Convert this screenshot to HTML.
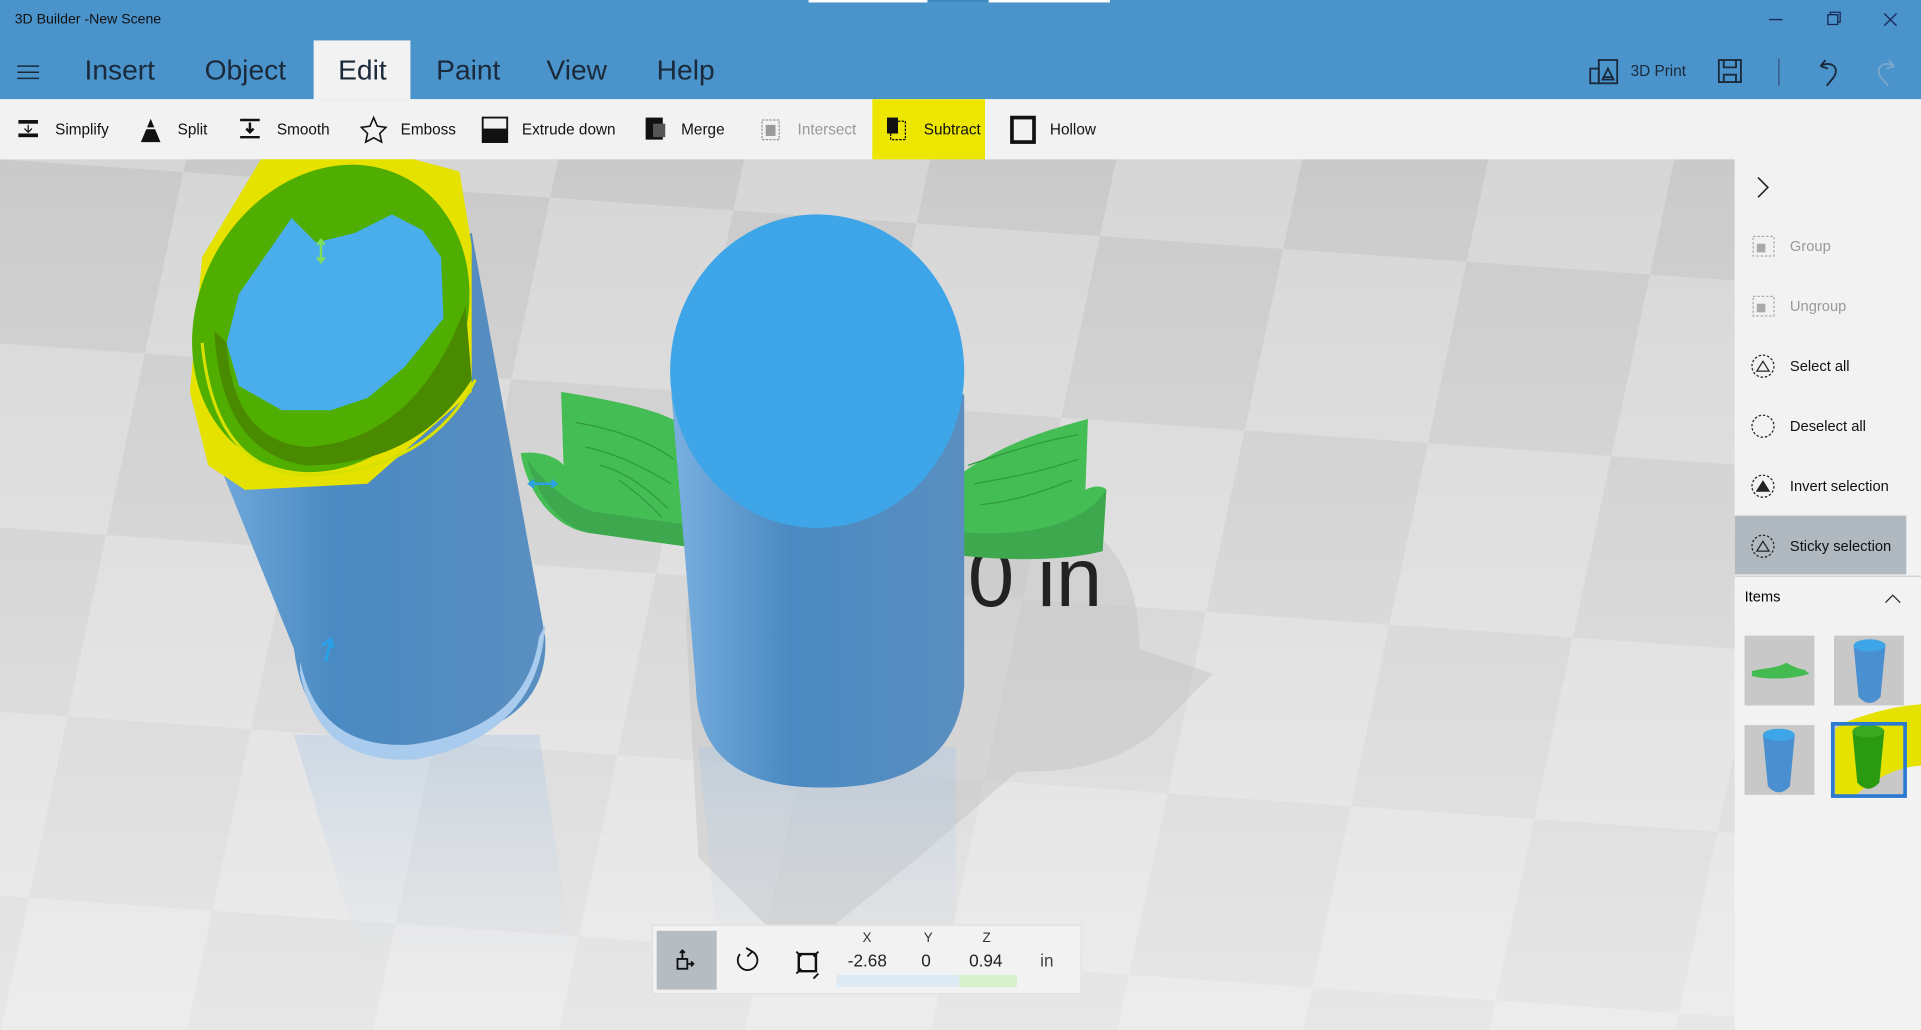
<!DOCTYPE html>
<html><head><meta charset="utf-8"><style>
html,body{margin:0;padding:0;width:1921px;height:1030px;overflow:hidden;background:#f2f2f2}
#r{position:absolute;left:0;top:0;width:1568px;height:841px;transform:scale(1.22513,1.22473);transform-origin:0 0;font-family:"Liberation Sans",sans-serif;color:#000}
.a{position:absolute;white-space:nowrap}
.tb{font-size:12.5px;top:99px;color:#111}
.tab{font-size:23px;top:44px;color:#1a2a3a}
.rp{font-size:12px;left:1461px;color:#111}
</style></head><body><div id="r">
<div class="a" style="left:0;top:0;width:1568px;height:81px;background:#4a93cb"></div>
<div class="a" style="left:660px;top:0;width:246px;height:2px;background:#fff"></div>
<div class="a" style="left:757px;top:0;width:50px;height:2px;background:#3a8ac0"></div>
<div class="a" style="left:12px;top:10px;font-size:11.5px;color:#111">3D Builder -New Scene</div>
<div class="a" style="left:256px;top:33px;width:79px;height:48px;background:#f2f2f2"></div>
<svg class="a" style="left:14px;top:53px" width="18" height="12"><path d="M0 1H18M0 6H18M0 11H18" stroke="#1a2a3a" stroke-width="1.2"/></svg>
<div class="a tab" style="left:69px">Insert</div>
<div class="a tab" style="left:167px">Object</div>
<div class="a tab" style="left:276px">Edit</div>
<div class="a tab" style="left:356px">Paint</div>
<div class="a tab" style="left:446px">View</div>
<div class="a tab" style="left:536px">Help</div>
<svg class="a" style="left:1440px;top:8px" width="115" height="18"><path d="M4 8H15M52 4h8v8h-8zM54 4v-2h8v8h-2M98 3l10 10M108 3l-10 10" stroke="#1a2a5a" stroke-width="1.1" fill="none"/></svg>
<svg class="a" style="left:1296px;top:46px" width="260" height="26" fill="none" stroke="#1a2a3a" stroke-width="1.5">
<rect x="9" y="3" width="15" height="19"/><rect x="2" y="10" width="7" height="12"/><path d="M12 19l4.5-9 4.5 9z M13 17h7"/>
<rect x="107" y="3" width="18" height="18"/><path d="M111 3v6h10V3M111 21v-6h10v6"/>
<path d="M156 2v22" stroke="#33507a" stroke-width="1"/>
<path d="M190 8l4-5M190 8l6 2M190 8c8-5 17 1 10 10l-5 6"/>
<path d="M250 8l-4-5M250 8l-6 2M250 8c-8-5-17 1-10 10l5 6" stroke="#7aa8cc"/>
</svg>
<div class="a" style="left:1331px;top:51px;font-size:12.5px;color:#1a2a3a">3D Print</div>
<div class="a" style="left:0;top:81px;width:1568px;height:49px;background:#f2f2f2"></div>
<div class="a" style="left:712px;top:81px;width:92px;height:59px;background:#ece600;border-radius:0 0 4px 4px"></div>
<svg class="a" style="left:0;top:90px" width="910" height="34">
<g fill="#111"><rect x="15" y="8" width="16" height="3"/><rect x="15" y="19" width="16" height="3"/><path d="M23 12v6M20 15l3 3 3-3" stroke="#111" fill="none"/>
<path d="M123 7l-8 19h16z"/><rect x="113" y="14" width="20" height="1.5" fill="#f2f2f2"/>
<path d="M196 8h16M196 22h16M204 10v8M201 15l3 3 3-3" stroke="#111" stroke-width="2" fill="none"/>
<path d="M305 6l3 7 7 1-5 5 1.5 7-6.5-3.5-6.5 3.5 1.5-7-5-5 7-1z" fill="none" stroke="#111" stroke-width="1.3"/>
<rect x="394" y="6" width="20" height="20" fill="none" stroke="#111" stroke-width="1.5"/><rect x="394" y="15" width="20" height="11"/>
<rect x="527" y="6" width="14" height="18"/><rect x="533" y="11" width="10" height="11" fill="#555"/>
<rect x="622" y="8" width="14" height="16" fill="none" stroke="#999" stroke-dasharray="2 1"/><rect x="625" y="12" width="8" height="9" fill="#999"/>
<rect x="727" y="9" width="12" height="15" fill="none" stroke="#111" stroke-dasharray="2 1"/><rect x="724" y="6" width="9" height="13"/>
<rect x="826" y="6" width="18" height="20" fill="none" stroke="#111" stroke-width="3"/></g>
</svg>
<div class="a tb" style="left:45px">Simplify</div>
<div class="a tb" style="left:145px">Split</div>
<div class="a tb" style="left:226px">Smooth</div>
<div class="a tb" style="left:327px">Emboss</div>
<div class="a tb" style="left:426px">Extrude down</div>
<div class="a tb" style="left:556px">Merge</div>
<div class="a tb" style="left:651px;color:#999">Intersect</div>
<div class="a tb" style="left:754px">Subtract</div>
<div class="a tb" style="left:857px">Hollow</div>
<svg class="a" style="left:0;top:130px" width="1416" height="711">
<defs>
<pattern id="ck" width="300" height="300" patternUnits="userSpaceOnUse" patternTransform="rotate(4) skewX(-8)">
<rect width="300" height="300" fill="#d6d6d6"/><rect width="150" height="150" fill="#cacaca"/><rect x="150" y="150" width="150" height="150" fill="#cacaca"/></pattern>
<linearGradient id="fade" x1="0" y1="0" x2="0" y2="1"><stop offset="0" stop-color="#fff" stop-opacity="0"/><stop offset="1" stop-color="#fff" stop-opacity=".55"/></linearGradient>
<linearGradient id="cyl" x1="0" y1="0" x2="1" y2="0"><stop offset="0" stop-color="#7ab0e0"/><stop offset=".4" stop-color="#4a8ac2"/><stop offset="1" stop-color="#5a8ec0"/></linearGradient>
<linearGradient id="ref" x1="0" y1="0" x2="0" y2="1"><stop offset="0" stop-color="#a8c6e4" stop-opacity=".4"/><stop offset="1" stop-color="#d0dcea" stop-opacity="0"/></linearGradient>
</defs>
<rect width="1416" height="711" fill="url(#ck)"/>
<rect width="1416" height="711" fill="url(#fade)"/>
<path d="M560 380c0-100 120-120 180-100 l100 10c60 0 90 40 90 110l60 20-50 50c-40 30-80 30-110 30l-80 70-100 80-80-80z" fill="#c2c2c2" opacity=".45"/>
<path d="M240 470l200 0 30 200h-170z" fill="url(#ref)"/>
<path d="M570 480h210v200h-190z" fill="url(#ref)"/>
<path d="M155 190 L385 60 L445 390 Q450 470 330 480 Q250 485 240 400 Z" fill="url(#cyl)"/>
<path d="M245 420 Q260 495 340 490 Q440 470 445 380 L440 390 Q430 465 335 478 Q260 482 245 410z" fill="#a8cbee"/>
<path d="M225 -20 L270 0 L300 -10 L375 10 L385 70 L385 190 L300 265 L200 270 L170 250 L155 190 L165 80 Z" fill="#e6e200"/>
<ellipse cx="270" cy="130" rx="108" ry="130" transform="rotate(28 270 130)" fill="#4fae00"/>
<path d="M175 140 Q180 240 250 250 Q340 250 385 180 L380 120 Q340 230 250 235 Q190 230 185 150z" fill="#4a8a00"/>
<path d="M165 150 Q175 255 250 258 Q350 255 388 180" fill="none" stroke="#d8e000" stroke-width="2.5"/>
<path d="M238 48 L258 68 L290 60 L320 45 L345 58 L360 80 L362 130 L330 170 L300 195 L270 205 L230 205 L195 185 L185 150 L195 110 Z" fill="#4aaeec"/>
<path d="M262 66v18M259 70l3-4 3 4M259 80l3 4 3-4" stroke="#7ce05a" stroke-width="2" fill="none"/>
<path d="M266 410l4-18M263 397l7-5 2 7" stroke="#2aa0e8" stroke-width="2.5" fill="none"/>
<path d="M458 190 C520 200 560 210 570 230 L573 318 L480 305 C450 300 430 270 425 240 C440 238 455 243 460 250 Z" fill="#44bd55"/>
<path d="M430 245 C440 280 460 300 480 305 L573 318 V300 L485 288 C465 282 445 265 430 245z" fill="#3da84e"/>
<path d="M470 215c30 5 60 15 80 30M478 235c25 5 50 18 70 30M490 250c20 5 40 20 55 35M505 262c15 10 25 20 35 30" stroke="#2f9a40" fill="none"/>
<text x="790" y="365" font-family="Liberation Sans,sans-serif" font-size="68" fill="#222">0 in</text>
<path d="M745 300 L780 260 C820 230 860 220 888 212 L886 270 C895 265 902 268 903 270 L900 320 C860 330 800 325 745 315 Z" fill="#44bd55"/>
<path d="M745 300 V318 C800 328 860 330 900 320 L903 270 C880 305 820 312 745 300z" fill="#3da84e"/>
<path d="M790 250c30-10 60-20 90-25M795 265c30-5 55-10 85-20M800 282c25-2 50-10 75-20" stroke="#2f9a40" fill="none"/>
<path d="M433 265h20M436 262l-4 3 4 3M450 262l4 3-4 3" stroke="#2aa0e8" stroke-width="2" fill="none"/>
<path d="M548 192 L787 192 L787 430 Q780 515 667 513 Q570 512 568 430 Z" fill="url(#cyl)"/>
<ellipse cx="667" cy="173" rx="120" ry="128" fill="#3ea6e8"/>
</svg>
<div class="a" style="left:532px;top:755px;width:351px;height:57px;background:#f2f2f2;border:1px solid #e0e0e0;box-sizing:border-box"></div>
<div class="a" style="left:536px;top:760px;width:49px;height:48px;background:#b5bcc2"></div>
<svg class="a" style="left:548px;top:770px" width="130" height="30" fill="none" stroke="#111" stroke-width="1.5">
<rect x="5" y="13" width="8" height="8"/><path d="M9 13V6M7 8l2-2 2 2M13 17h5M16 15l2 2-2 2"/>
<path d="M56 9 A8 8 0 1 0 66 7"/><path d="M61 4l5 3-4 4"/>
<path d="M104 9h14v14h-14z" stroke-width="2"/><path d="M102 7l4 4M120 7l-4 4M102 25l4-4M120 25l-4 4"/>
</svg>
<div class="a" style="left:683px;top:796px;width:100px;height:10px;background:#ddeaf3"></div>
<div class="a" style="left:783px;top:796px;width:47px;height:10px;background:#d8f0cc"></div>
<div class="a" style="left:704px;top:760px;font-size:11px;color:#333">X</div>
<div class="a" style="left:754px;top:760px;font-size:11px;color:#333">Y</div>
<div class="a" style="left:802px;top:760px;font-size:11px;color:#333">Z</div>
<div class="a" style="left:692px;top:776px;font-size:14px;color:#222">-2.68</div>
<div class="a" style="left:752px;top:776px;font-size:14px;color:#222">0</div>
<div class="a" style="left:791px;top:776px;font-size:14px;color:#222">0.94</div>
<div class="a" style="left:849px;top:776px;font-size:14px;color:#444">in</div>
<div class="a" style="left:1416px;top:130px;width:152px;height:711px;background:#f2f2f2"></div>
<svg class="a" style="left:1430px;top:143px" width="20" height="20"><path d="M5 2l8 8-8 8" stroke="#222" stroke-width="1.3" fill="none"/></svg>
<div class="a" style="left:1416px;top:421px;width:140px;height:48px;background:#b0b8c0"></div>
<svg class="a" style="left:1428px;top:190px" width="24" height="270" fill="none" stroke="#222" stroke-width="1" stroke-dasharray="2 1.5">
<rect x="3" y="3" width="17" height="16" stroke="#aaa"/><rect x="6" y="9" width="7" height="7" fill="#aaa" stroke="none"/>
<rect x="3" y="52" width="17" height="16" stroke="#aaa"/><rect x="6" y="58" width="7" height="7" fill="#aaa" stroke="none"/>
<circle cx="11" cy="109" r="9"/><path d="M6 113l5-8 5 8z" stroke-dasharray="none"/>
<circle cx="11" cy="158" r="9"/>
<circle cx="11" cy="207" r="9"/><path d="M6 211l5-8 5 8z" fill="#222" stroke-dasharray="none"/>
<circle cx="11" cy="256" r="9"/><path d="M6 260l5-8 5 8z" stroke-dasharray="none"/>
</svg>
<div class="a rp" style="top:194px;color:#999">Group</div>
<div class="a rp" style="top:243px;color:#999">Ungroup</div>
<div class="a rp" style="top:292px">Select all</div>
<div class="a rp" style="top:341px">Deselect all</div>
<div class="a rp" style="top:390px">Invert selection</div>
<div class="a rp" style="top:439px">Sticky selection</div>
<div class="a" style="left:1416px;top:470px;width:152px;height:1px;background:#ccc"></div>
<div class="a" style="left:1424px;top:480px;font-size:12px">Items</div>
<svg class="a" style="left:1538px;top:484px" width="14" height="10"><path d="M1 8l6-6 6 6" stroke="#222" fill="none"/></svg>
<svg class="a" style="left:1420px;top:515px" width="148" height="145">
<rect x="4" y="4" width="57" height="57" fill="#c8c8c8"/>
<path d="M10 33c10-3 20-2 28-7 5 3 10 5 15 6l4 3c-15 5-35 5-47 2z" fill="#44bb50"/>
<rect x="77" y="4" width="57" height="57" fill="#c8c8c8"/>
<path d="M93 12h26l-4 42q-9 10-18 0z" fill="#4a90d0"/><ellipse cx="106" cy="12" rx="13" ry="5" fill="#3ea6e8"/>
<rect x="4" y="77" width="57" height="57" fill="#c8c8c8"/>
<path d="M19 85h26l-4 42q-9 10-18 0z" fill="#4a90d0"/><ellipse cx="32" cy="85" rx="13" ry="5" fill="#3ea6e8"/>
<rect x="77" y="77" width="57" height="57" fill="#c8c8c8"/>
<path d="M88 74 Q120 62 148 60 V110 Q120 112 95 134 H78 V80z" fill="#e6e200"/>
<path d="M92 82h26l-4 42q-9 10-18 0z" fill="#2a9a10"/><ellipse cx="105" cy="82" rx="13" ry="5" fill="#3aa820"/>
<rect x="76" y="76" width="59" height="59" fill="none" stroke="#2a7ad0" stroke-width="3"/>
</svg>
</div></body></html>
